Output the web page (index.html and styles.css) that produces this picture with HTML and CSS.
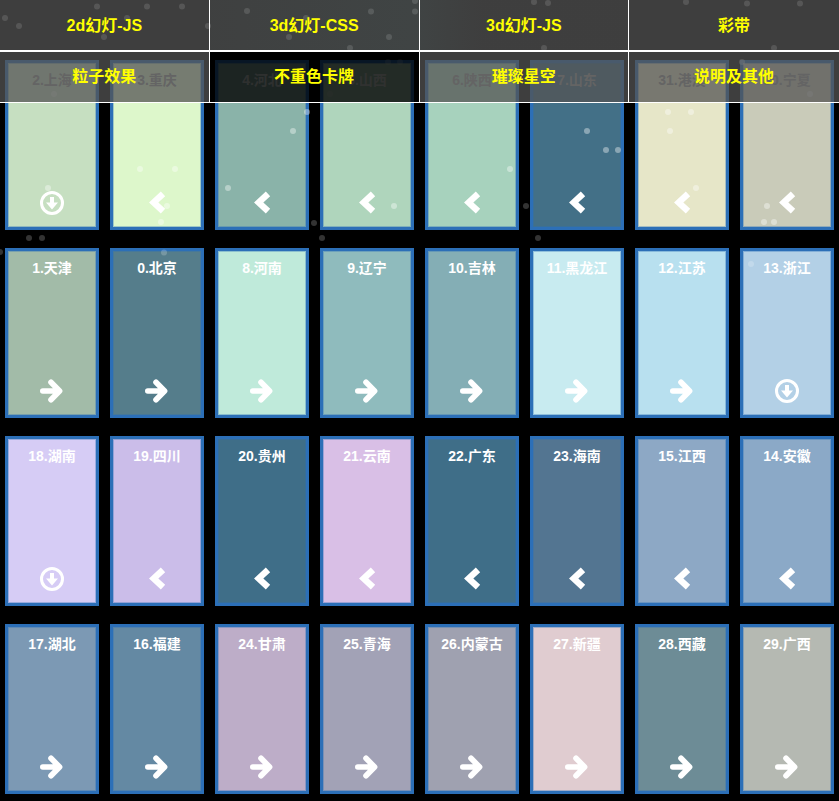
FILE: index.html
```html
<!DOCTYPE html>
<html>
<head>
    <meta charset="utf-8">
    <title>Provinces</title>
    <link rel="stylesheet" href="styles.css">
</head>
<body>
    <!-- icons used by the cards -->
    <svg class="defs">
        <symbol id="i-next" viewBox="0 0 24 24">
            <path d="M2.8 12H18M11 3.2L19.6 12L11 20.8" fill="none" stroke="#fff" stroke-width="5.6" stroke-linecap="round" stroke-linejoin="round"/>
        </symbol>
        <symbol id="i-prev" viewBox="0 0 24 24">
            <path d="M18 2.8L8.7 11.5L18 20.2" fill="none" stroke="#fff" stroke-width="6.4" stroke-linejoin="miter"/>
        </symbol>
        <symbol id="i-down" viewBox="0 0 24 24">
            <circle cx="12" cy="12" r="10.5" fill="none" stroke="#fff" stroke-width="3"/>
            <path d="M10 6h4v5.6h4L12 18.5L6 11.6h4z" fill="#fff"/>
        </symbol>
    </svg>

    <!-- the menu over the cards -->
    <div class="menu">
        <a class="item" href="#">2d幻灯-JS</a>
        <a class="item tint-left" href="#">3d幻灯-CSS</a>
        <a class="item tint-right" href="#">3d幻灯-JS</a>
        <a class="item" href="#">彩带</a>
        <a class="item low" href="#">粒子效果</a>
        <a class="item low dark" href="#">不重色卡牌</a>
        <a class="item low" href="#">璀璨星空</a>
        <a class="item low" href="#">说明及其他</a>
    </div>

    <!-- the cards -->
    <div class="cards">
        <div class="card p2 mesh under"><p>2.上海</p><svg class="icon"><use href="#i-down"/></svg></div>
        <div class="card p3 under"><p>3.重庆</p><svg class="icon"><use href="#i-prev"/></svg></div>
        <div class="card p4 shade"><p>4.河北</p><svg class="icon"><use href="#i-prev"/></svg></div>
        <div class="card p5 shade"><p>5.山西</p><svg class="icon"><use href="#i-prev"/></svg></div>
        <div class="card p6 mesh under"><p>6.陕西</p><svg class="icon"><use href="#i-prev"/></svg></div>
        <div class="card p7 under"><p>7.山东</p><svg class="icon"><use href="#i-prev"/></svg></div>
        <div class="card p31 under"><p>31.港澳</p><svg class="icon"><use href="#i-prev"/></svg></div>
        <div class="card p30 under"><p>30.宁夏</p><svg class="icon"><use href="#i-prev"/></svg></div>

        <div class="card p1"><p>1.天津</p><svg class="icon"><use href="#i-next"/></svg></div>
        <div class="card p0"><p>0.北京</p><svg class="icon"><use href="#i-next"/></svg></div>
        <div class="card p8"><p>8.河南</p><svg class="icon"><use href="#i-next"/></svg></div>
        <div class="card p9"><p>9.辽宁</p><svg class="icon"><use href="#i-next"/></svg></div>
        <div class="card p10"><p>10.吉林</p><svg class="icon"><use href="#i-next"/></svg></div>
        <div class="card p11"><p>11.黑龙江</p><svg class="icon"><use href="#i-next"/></svg></div>
        <div class="card p12"><p>12.江苏</p><svg class="icon"><use href="#i-next"/></svg></div>
        <div class="card p13"><p>13.浙江</p><svg class="icon"><use href="#i-down"/></svg></div>

        <div class="card p18"><p>18.湖南</p><svg class="icon"><use href="#i-down"/></svg></div>
        <div class="card p19"><p>19.四川</p><svg class="icon"><use href="#i-prev"/></svg></div>
        <div class="card p20"><p>20.贵州</p><svg class="icon"><use href="#i-prev"/></svg></div>
        <div class="card p21"><p>21.云南</p><svg class="icon"><use href="#i-prev"/></svg></div>
        <div class="card p22"><p>22.广东</p><svg class="icon"><use href="#i-prev"/></svg></div>
        <div class="card p23"><p>23.海南</p><svg class="icon"><use href="#i-prev"/></svg></div>
        <div class="card p15"><p>15.江西</p><svg class="icon"><use href="#i-prev"/></svg></div>
        <div class="card p14"><p>14.安徽</p><svg class="icon"><use href="#i-prev"/></svg></div>

        <div class="card p17"><p>17.湖北</p><svg class="icon"><use href="#i-next"/></svg></div>
        <div class="card p16"><p>16.福建</p><svg class="icon"><use href="#i-next"/></svg></div>
        <div class="card p24"><p>24.甘肃</p><svg class="icon"><use href="#i-next"/></svg></div>
        <div class="card p25"><p>25.青海</p><svg class="icon"><use href="#i-next"/></svg></div>
        <div class="card p26"><p>26.内蒙古</p><svg class="icon"><use href="#i-next"/></svg></div>
        <div class="card p27"><p>27.新疆</p><svg class="icon"><use href="#i-next"/></svg></div>
        <div class="card p28"><p>28.西藏</p><svg class="icon"><use href="#i-next"/></svg></div>
        <div class="card p29"><p>29.广西</p><svg class="icon"><use href="#i-next"/></svg></div>
    </div>

    <svg class="dots" width="839" height="801" viewBox="0 0 839 801">
        <g class="bright">
            <circle cx="97" cy="6.5" r="3"/><circle cx="147" cy="6.5" r="3"/><circle cx="182" cy="6.5" r="3"/>
            <circle cx="5" cy="18" r="3"/><circle cx="19" cy="26" r="3"/><circle cx="127" cy="18" r="3"/>
            <circle cx="104" cy="37" r="3"/><circle cx="208" cy="26" r="3"/><circle cx="247" cy="11" r="3"/>
            <circle cx="306" cy="18" r="3"/><circle cx="371" cy="11.5" r="3"/><circle cx="415" cy="11.5" r="3"/>
            <circle cx="415" cy="1" r="3"/><circle cx="289" cy="37" r="3"/><circle cx="389" cy="37" r="3"/>
            <circle cx="350" cy="48" r="3"/><circle cx="534" cy="2" r="3"/><circle cx="548" cy="3" r="3"/>
            <circle cx="686" cy="2" r="3"/><circle cx="747" cy="3.5" r="3"/><circle cx="800" cy="3.5" r="3"/>
            <circle cx="544" cy="48" r="3"/><circle cx="774" cy="48" r="3"/>
            <circle cx="54" cy="94" r="3"/><circle cx="742" cy="62" r="3"/><circle cx="810" cy="94" r="3"/>
            <circle cx="307" cy="112" r="3"/><circle cx="293" cy="131" r="3"/><circle cx="140" cy="169" r="3"/>
            <circle cx="175" cy="169" r="3"/><circle cx="228" cy="188" r="3"/><circle cx="48" cy="188" r="3"/>
            <circle cx="167" cy="206" r="3"/><circle cx="161" cy="222" r="3"/><circle cx="394" cy="206" r="3"/>
            <circle cx="587" cy="131" r="3"/><circle cx="606" cy="150" r="3"/><circle cx="618" cy="150" r="3"/>
            <circle cx="668" cy="112" r="3"/><circle cx="691" cy="112" r="3"/><circle cx="670" cy="131" r="3"/>
            <circle cx="510" cy="169" r="3"/><circle cx="696" cy="188" r="3"/><circle cx="767" cy="206" r="3"/>
            <circle cx="764" cy="222" r="3"/><circle cx="774" cy="222" r="3"/>
        </g>
        <g class="dim">
            <circle cx="388" cy="62" r="3"/><circle cx="400" cy="62" r="3"/><circle cx="330" cy="94" r="3"/>
            <circle cx="314" cy="223" r="3"/><circle cx="29" cy="238" r="3"/><circle cx="42" cy="238" r="3"/>
            <circle cx="322" cy="238" r="3"/><circle cx="526" cy="206" r="3"/><circle cx="538" cy="238" r="3"/>
            <circle cx="0" cy="252" r="3"/><circle cx="164" cy="252.5" r="3"/><circle cx="751" cy="264" r="3"/>
        </g>
    </svg>
</body>
</html>
```

FILE: styles.css
```css
/* The page itself */
body {
    font-family: "Liberation Sans", "Noto Sans CJK SC", sans-serif;
    background: black;
    margin: 0;
    padding: 0;
    overflow: hidden;
}

.defs {
    display: none;
}

/* The menu lies over the first row of cards */
.menu {
    position: absolute;
    top: 0;
    left: 0;
    z-index: 2;
    width: 839px;
    display: grid;
    grid-template-columns: repeat(4, 1fr);
}

.item {
    box-sizing: border-box;
    height: 51px;
    line-height: 51px;
    font-size: 16px;
    font-weight: bold;
    text-align: center;
    text-decoration: none;
    color: #ffff00;
    background: rgba(83, 83, 83, 0.75);
    border-right: 1px solid white;
    border-bottom: 1px solid white;
}

.item:nth-child(4n) {
    border-right: 0;
}

.tint-left {
    background: linear-gradient(to right, rgba(84, 86, 86, 0.75), rgba(85, 91, 91, 0.75));
}

.tint-right {
    background: linear-gradient(to right, rgba(85, 90, 90, 0.75), rgba(83, 83, 83, 0.75) 30%);
}

.low {
    height: 52px;
    line-height: 50px;
    border-top: 1px solid white;
}

.dark {
    background: rgba(0, 0, 0, 0.8);
}

/* The cards */
.cards {
    display: grid;
    grid-template-columns: repeat(8, 94px);
    grid-auto-rows: 169.5px;
    column-gap: 11px;
    row-gap: 18.5px;
    padding: 60px 5px 7px;
}

.card {
    position: relative;
    box-sizing: border-box;
    display: flex;
    flex-direction: column;
    align-items: center;
    border: 3px solid #2c6fb7;
    box-shadow: inset 0 0 0 1px rgba(44, 111, 183, 0.35);
    padding: 8px 0 11.5px;
    color: white;
}

.card p {
    margin: 0;
    font-size: 14px;
    font-weight: bold;
    line-height: 18px;
}

.under p {
    color: #969696;
}

.shade p {
    color: rgba(255, 255, 255, 0.8);
}

/* The grain seen through the menu on some cards */
.mesh::before {
    content: "";
    position: absolute;
    top: 0;
    left: 0;
    right: 0;
    height: 39px;
    background-image: radial-gradient(rgba(0, 0, 0, 0.1) 0.6px, transparent 0.7px);
    background-size: 2px 2px;
}

.icon {
    display: block;
    width: 24px;
    height: 24px;
    margin-top: auto;
}

/* One colour for each province */
.p2 { background: #c6dfc1; }
.p3 { background: #ddf7cb; }
.p4 { background: #8ab3a9; }
.p5 { background: #afd5bc; }
.p6 { background: #a7d2bd; }
.p7 { background: #437087; }
.p31 { background: #e6e6c8; }
.p30 { background: #c9cbb9; }
.p1 { background: #a2bba8; }
.p0 { background: #557d8b; }
.p8 { background: #bfeada; }
.p9 { background: #8fbbbd; }
.p10 { background: #84aeb5; }
.p11 { background: #c8ebf0; }
.p12 { background: #b8e0ef; }
.p13 { background: #b3d0e6; }
.p18 { background: #d6ccf5; }
.p19 { background: #cbbde9; }
.p20 { background: #3f6e88; }
.p21 { background: #d9bfe6; }
.p22 { background: #3f6e88; }
.p23 { background: #537591; }
.p15 { background: #8da8c5; }
.p14 { background: #8ba9c7; }
.p17 { background: #7c99b4; }
.p16 { background: #6489a3; }
.p24 { background: #bdadc8; }
.p25 { background: #a2a2b6; }
.p26 { background: #9fa1b0; }
.p27 { background: #e0ccd0; }
.p28 { background: #6d8c96; }
.p29 { background: #b5b9b2; }

/* The particles float over the cards and under the menu */
.dots {
    position: absolute;
    top: 0;
    left: 0;
    z-index: 1;
}

.bright circle {
    fill: rgba(255, 255, 255, 0.38);
}

.dim circle {
    fill: rgba(255, 255, 255, 0.2);
}
```
